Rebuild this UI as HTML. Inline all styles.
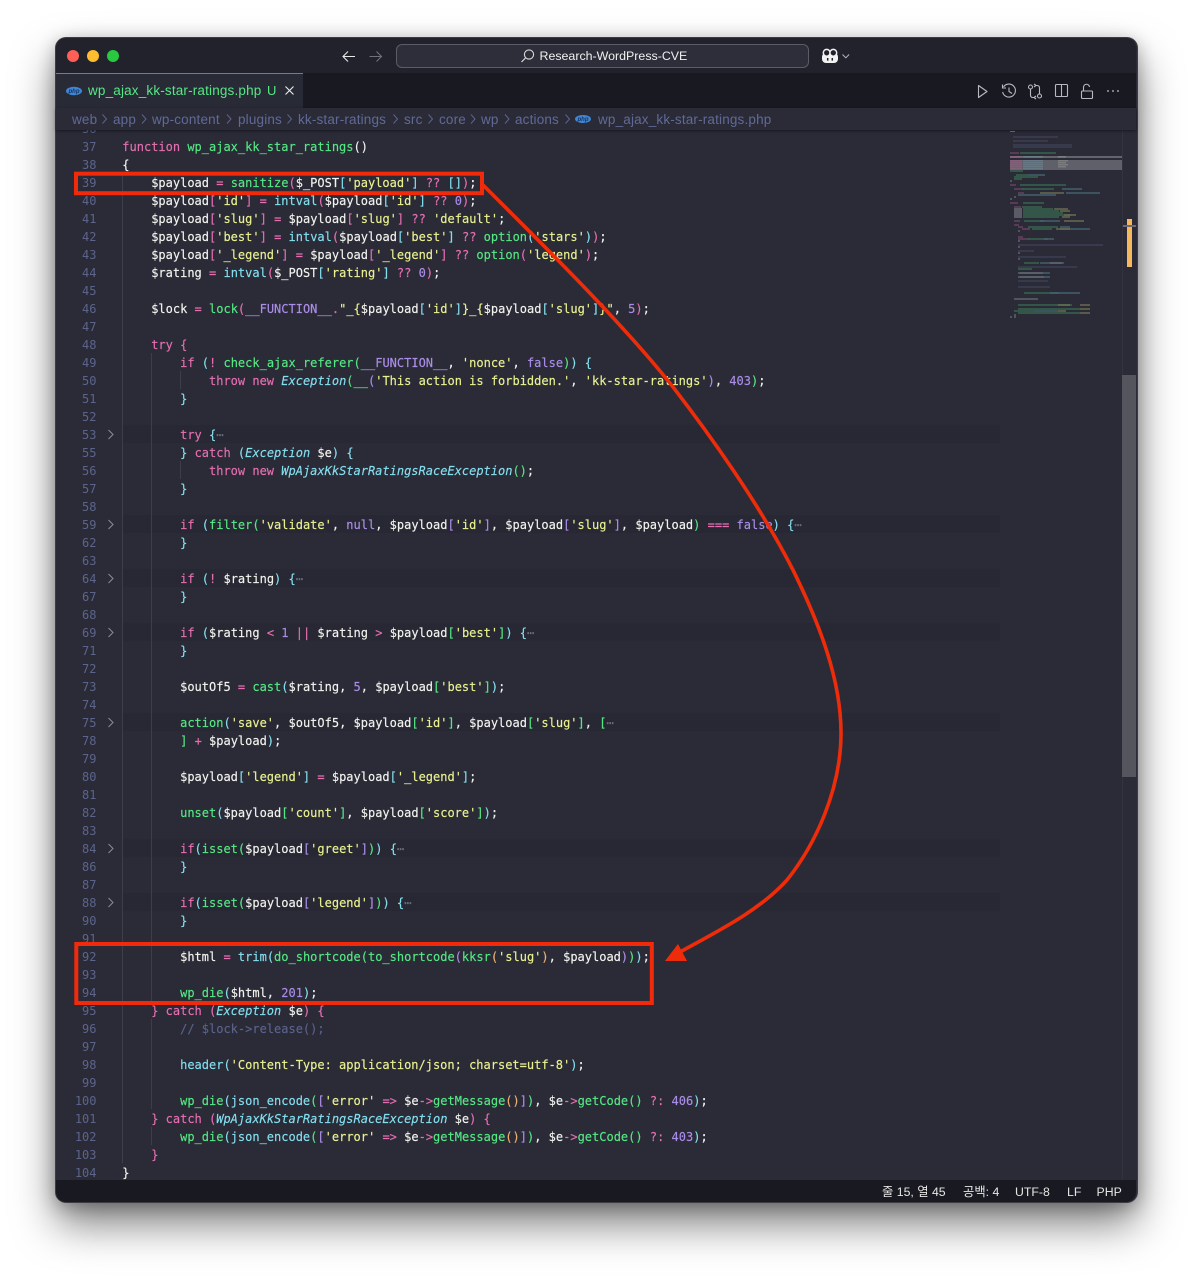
<!DOCTYPE html>
<html lang="ko">
<head>
<meta charset="utf-8">
<title>wp_ajax_kk-star-ratings.php</title>
<style>
html,body{margin:0;padding:0;width:1192px;height:1276px;overflow:hidden;background:#fff}
body{position:relative;font-family:"Liberation Sans","Noto Sans CJK KR",sans-serif}
#win{position:absolute;left:55.500px;top:37.500px;width:1081px;height:1164px;border-radius:10px;background:#2a2b37;box-shadow:0 0 0 1px #3c3c42,0 22px 42px rgba(0,0,0,.5),0 4px 18px rgba(0,0,0,.3)}
#abs{position:absolute;left:0;top:0;width:1192px;height:1276px;overflow:hidden}
.a{position:absolute}
#title{left:56px;top:38px;width:1080px;height:35px;background:#21222c;border-radius:10px 10px 0 0}
#tabs{left:56px;top:73px;width:1080px;height:35px;background:#191a21}
#tab{left:56px;top:73px;width:247px;height:35px;background:#282a36;border-top:1px solid #a5628e;box-sizing:border-box}
#crumb{left:56px;top:108px;width:1080px;height:22px;background:#2a2b37;box-shadow:0 1px 3px rgba(0,0,0,.45);z-index:3}
#status{left:56px;top:1180px;width:1080px;height:22px;background:#191a21;border-radius:0 0 10px 10px;z-index:4}
#search{left:396px;top:44px;width:413px;height:24px;box-sizing:border-box;border:1px solid #5b5c66;border-radius:6px;background:#2d2e39}
.ui{white-space:nowrap;line-height:16px}
.cr{color:#616a97;font-size:13.500px;letter-spacing:.17px;top:112px;z-index:5}
.st{color:#e6e6e6;font-size:12.300px;top:1184px;z-index:5}
#ed{left:56px;top:130px;width:1066px;height:1050px;overflow:hidden}
pre{margin:0;font:12px/18px "DejaVu Sans Mono","Liberation Mono",monospace;position:absolute;top:-10px}
#nums{left:0;width:40.500px;text-align:right;color:#5d648c}
#code{left:66.300px;color:#f3f3ee;-webkit-text-stroke:.15px}
#code i{font-style:normal}
.k{color:#e56fb1}.f{color:#55e884}.t{color:#84dfef}.s{color:#eaf191}.n{color:#ab8de8}.o{color:#f0b070}.m{color:#5b618a}
#code i.ci{color:#84dfef;font-style:italic}
#code i.dot{color:#6a6d80;line-height:0}
.fold{position:absolute;left:66px;width:878px;height:18px;background:#272833}
.g{position:absolute;width:1px;background:#3d3e4b}
#sb{left:1122px;top:130px;width:14px;height:1050px;border-left:1px solid #32333f;box-sizing:border-box;z-index:2}
#slider{left:1122px;top:375px;width:14px;height:402px;background:#54555d;z-index:2}
svg{position:absolute;left:0;top:0;overflow:visible}
</style>
</head>
<body>
<div id="win"></div>
<div id="abs">
<div id="title" class="a"></div>
<div id="tabs" class="a"></div>
<div id="tab" class="a"></div>
<div id="crumb" class="a"></div>
<div id="search" class="a"></div>
<div id="status" class="a"></div>

<div class="a ui" style="left:539.500px;top:48px;color:#f0f0f0;font-size:12.400px;z-index:5">Research-WordPress-CVE</div>
<div class="a ui" style="left:88px;top:83px;color:#55e884;font-size:13.500px;letter-spacing:.17px;z-index:5">wp_ajax_kk-star-ratings.php</div>
<div class="a ui" style="left:267px;top:83px;color:#55e884;font-size:13px;z-index:5">U</div>

<span class="a ui cr" style="left:72px">web</span>
<span class="a ui cr" style="left:113px">app</span>
<span class="a ui cr" style="left:152px">wp-content</span>
<span class="a ui cr" style="left:238px">plugins</span>
<span class="a ui cr" style="left:298px">kk-star-ratings</span>
<span class="a ui cr" style="left:404px">src</span>
<span class="a ui cr" style="left:439px">core</span>
<span class="a ui cr" style="left:481px">wp</span>
<span class="a ui cr" style="left:515px">actions</span>
<span class="a ui cr" style="left:598px">wp_ajax_kk-star-ratings.php</span>

<span class="a ui st" style="left:882px">줄 15, 열 45</span>
<span class="a ui st" style="left:963px">공백: 4</span>
<span class="a ui st" style="left:1015px">UTF-8</span>
<span class="a ui st" style="left:1067px">LF</span>
<span class="a ui st" style="left:1096.500px">PHP</span>

<div id="ed" class="a">
<div class="fold" style="top:295px"></div>
<div class="fold" style="top:385px"></div>
<div class="fold" style="top:439px"></div>
<div class="fold" style="top:493px"></div>
<div class="fold" style="top:583px"></div>
<div class="fold" style="top:709px"></div>
<div class="fold" style="top:763px"></div>
<div class="g" style="left:66px;top:43px;height:990px"></div>
<div class="g" style="left:95px;top:223px;height:648px"></div>
<div class="g" style="left:95px;top:889px;height:90px"></div>
<div class="g" style="left:95px;top:997px;height:18px"></div>
<div class="g" style="left:124px;top:241px;height:18px"></div>
<div class="g" style="left:124px;top:331px;height:18px"></div>
<pre id="nums">36
37
38
39
40
41
42
43
44
45
46
47
48
49
50
51
52
53
55
56
57
58
59
62
63
64
67
68
69
71
72
73
74
75
78
79
80
81
82
83
84
86
87
88
90
91
92
93
94
95
96
97
98
99
100
101
102
103
104</pre>
<pre id="code">

<i class="k">function</i> <i class="f">wp_ajax_kk_star_ratings</i>()
{
    $payload <i class="k">=</i> <i class="f">sanitize</i><i class="k">(</i>$_POST<i class="t">[</i><i class="s">'payload'</i><i class="t">]</i> <i class="k">??</i> <i class="t">[]</i><i class="k">)</i>;
    $payload<i class="k">[</i><i class="s">'id'</i><i class="k">]</i> <i class="k">=</i> <i class="t">intval</i><i class="k">(</i>$payload<i class="t">[</i><i class="s">'id'</i><i class="t">]</i> <i class="k">??</i> <i class="n">0</i><i class="k">)</i>;
    $payload<i class="k">[</i><i class="s">'slug'</i><i class="k">]</i> <i class="k">=</i> $payload<i class="k">[</i><i class="s">'slug'</i><i class="k">]</i> <i class="k">??</i> <i class="s">'default'</i>;
    $payload<i class="k">[</i><i class="s">'best'</i><i class="k">]</i> <i class="k">=</i> <i class="t">intval</i><i class="k">(</i>$payload<i class="t">[</i><i class="s">'best'</i><i class="t">]</i> <i class="k">??</i> <i class="f">option</i><i class="t">(</i><i class="s">'stars'</i><i class="t">)</i><i class="k">)</i>;
    $payload<i class="k">[</i><i class="s">'_legend'</i><i class="k">]</i> <i class="k">=</i> $payload<i class="k">[</i><i class="s">'_legend'</i><i class="k">]</i> <i class="k">??</i> <i class="f">option</i><i class="k">(</i><i class="s">'legend'</i><i class="k">)</i>;
    $rating <i class="k">=</i> <i class="t">intval</i><i class="k">(</i>$_POST<i class="t">[</i><i class="s">'rating'</i><i class="t">]</i> <i class="k">??</i> <i class="n">0</i><i class="k">)</i>;

    $lock <i class="k">=</i> <i class="f">lock</i><i class="k">(</i><i class="n">__FUNCTION__</i><i class="k">.</i><i class="s">"_{</i>$payload<i class="t">[</i><i class="s">'id'</i><i class="t">]</i><i class="s">}_{</i>$payload<i class="t">[</i><i class="s">'slug'</i><i class="t">]</i><i class="s">}"</i>, <i class="n">5</i><i class="k">)</i>;

    <i class="k">try</i> <i class="k">{</i>
        <i class="k">if</i> <i class="t">(</i><i class="k">!</i> <i class="f">check_ajax_referer</i><i class="f">(</i><i class="n">__FUNCTION__</i>, <i class="s">'nonce'</i>, <i class="n">false</i><i class="f">)</i><i class="t">)</i> <i class="t">{</i>
            <i class="k">throw new</i> <i class="ci">Exception</i><i class="f">(</i><i class="f">__</i><i class="n">(</i><i class="s">'This action is forbidden.'</i>, <i class="s">'kk-star-ratings'</i><i class="n">)</i>, <i class="n">403</i><i class="f">)</i>;
        <i class="t">}</i>

        <i class="k">try</i> <i class="t">{</i><i class="dot">⋯</i>
        <i class="t">}</i> <i class="k">catch</i> <i class="t">(</i><i class="ci">Exception</i> $e<i class="t">)</i> <i class="t">{</i>
            <i class="k">throw new</i> <i class="ci">WpAjaxKkStarRatingsRaceException</i><i class="f">()</i>;
        <i class="t">}</i>

        <i class="k">if</i> <i class="t">(</i><i class="f">filter(</i><i class="s">'validate'</i>, <i class="n">null</i>, $payload<i class="n">[</i><i class="s">'id'</i><i class="n">]</i>, $payload<i class="n">[</i><i class="s">'slug'</i><i class="n">]</i>, $payload<i class="f">)</i> <i class="k">===</i> <i class="n">false</i><i class="t">)</i> <i class="t">{</i><i class="dot">⋯</i>
        <i class="t">}</i>

        <i class="k">if</i> <i class="t">(</i><i class="k">!</i> $rating<i class="t">)</i> <i class="t">{</i><i class="dot">⋯</i>
        <i class="t">}</i>

        <i class="k">if</i> <i class="t">(</i>$rating <i class="k">&lt;</i> <i class="n">1</i> <i class="k">||</i> $rating <i class="k">&gt;</i> $payload<i class="f">[</i><i class="s">'best'</i><i class="f">]</i><i class="t">)</i> <i class="t">{</i><i class="dot">⋯</i>
        <i class="t">}</i>

        $outOf5 <i class="k">=</i> <i class="f">cast</i><i class="t">(</i>$rating, <i class="n">5</i>, $payload<i class="f">[</i><i class="s">'best'</i><i class="f">]</i><i class="t">)</i>;

        <i class="f">action</i><i class="t">(</i><i class="s">'save'</i>, $outOf5, $payload<i class="f">[</i><i class="s">'id'</i><i class="f">]</i>, $payload<i class="f">[</i><i class="s">'slug'</i><i class="f">]</i>, <i class="f">[</i><i class="dot">⋯</i>
        <i class="f">]</i> <i class="k">+</i> $payload<i class="t">)</i>;

        $payload<i class="t">[</i><i class="s">'legend'</i><i class="t">]</i> <i class="k">=</i> $payload<i class="t">[</i><i class="s">'_legend'</i><i class="t">]</i>;

        <i class="f">unset</i><i class="t">(</i>$payload<i class="f">[</i><i class="s">'count'</i><i class="f">]</i>, $payload<i class="f">[</i><i class="s">'score'</i><i class="f">]</i><i class="t">)</i>;

        <i class="k">if</i><i class="t">(</i><i class="f">isset(</i>$payload<i class="n">[</i><i class="s">'greet'</i><i class="n">]</i><i class="f">)</i><i class="t">)</i> <i class="t">{</i><i class="dot">⋯</i>
        <i class="t">}</i>

        <i class="k">if</i><i class="t">(</i><i class="f">isset(</i>$payload<i class="n">[</i><i class="s">'legend'</i><i class="n">]</i><i class="f">)</i><i class="t">)</i> <i class="t">{</i><i class="dot">⋯</i>
        <i class="t">}</i>

        $html <i class="k">=</i> <i class="t">trim(</i><i class="f">do_shortcode(to_shortcode</i><i class="n">(</i><i class="f">kksr</i><i class="o">(</i><i class="s">'slug'</i><i class="o">)</i>, $payload<i class="n">)</i><i class="f">)</i><i class="t">)</i>;

        <i class="f">wp_die</i><i class="t">(</i>$html, <i class="n">201</i><i class="t">)</i>;
    <i class="k">} catch (</i><i class="ci">Exception</i> $e<i class="k">) {</i>
        <i class="m">// $lock-&gt;release();</i>

        <i class="t">header(</i><i class="s">'Content-Type: application/json; charset=utf-8'</i><i class="t">)</i>;

        <i class="f">wp_die</i><i class="t">(</i><i class="t">json_encode</i><i class="f">(</i><i class="n">[</i><i class="s">'error'</i> <i class="k">=&gt;</i> $e<i class="k">-&gt;</i><i class="f">getMessage</i><i class="o">()</i><i class="n">]</i><i class="f">)</i>, $e<i class="k">-&gt;</i><i class="f">getCode()</i> <i class="k">?:</i> <i class="n">406</i><i class="t">)</i>;
    <i class="k">} catch (</i><i class="ci">WpAjaxKkStarRatingsRaceException</i> $e<i class="k">) {</i>
        <i class="f">wp_die</i><i class="t">(</i><i class="t">json_encode</i><i class="f">(</i><i class="n">[</i><i class="s">'error'</i> <i class="k">=&gt;</i> $e<i class="k">-&gt;</i><i class="f">getMessage</i><i class="o">()</i><i class="n">]</i><i class="f">)</i>, $e<i class="k">-&gt;</i><i class="f">getCode()</i> <i class="k">?:</i> <i class="n">403</i><i class="t">)</i>;
    <i class="k">}</i>
}</pre>
</div>

<div id="sb" class="a"></div>
<div id="slider" class="a"></div>
<div class="a" style="left:1127px;top:219px;width:5px;height:48px;background:#f5b85f;z-index:3"></div>
<div class="a" style="left:1123px;top:225px;width:13px;height:2px;background:#6a6b72;z-index:3"></div>

<svg width="1192" height="1276" style="z-index:6" fill="none">
  <!-- traffic lights -->
  <circle cx="73" cy="56" r="6" fill="#ff5f57"/>
  <circle cx="93" cy="56" r="6" fill="#febc2e"/>
  <circle cx="113" cy="56" r="6" fill="#28c840"/>
  <!-- nav arrows -->
  <path d="M355 56.500H343.500M348 51.500L343 56.500L348 61.500" stroke="#e8e8e8" stroke-width="1.100"/>
  <path d="M369.500 56.500H381M376.500 51.500L381.500 56.500L376.500 61.500" stroke="#70717a" stroke-width="1.100"/>
  <!-- search icon -->
  <circle cx="529" cy="54.500" r="4.600" stroke="#d8d8d8" stroke-width="1.100"/>
  <path d="M525.500 58L521.500 62" stroke="#d8d8d8" stroke-width="1.200"/>
  <!-- copilot -->
  <rect x="822" y="53" width="16" height="10" rx="4" fill="#f2f2f2"/>
  <circle cx="826.700" cy="52.800" r="3.400" fill="#21222c" stroke="#f2f2f2" stroke-width="1.500"/>
  <circle cx="833.300" cy="52.800" r="3.400" fill="#21222c" stroke="#f2f2f2" stroke-width="1.500"/>
  <path d="M827.700 58v2.600M832.300 58v2.600" stroke="#21222c" stroke-width="1.500"/>
  <path d="M842.500 54.500l3.300 3.300 3.300-3.300" stroke="#b5b5bb" stroke-width="1"/>
  <!-- tab php icon -->
  <ellipse cx="74" cy="91" rx="8" ry="4.300" fill="#3f86d6"/>
  <text x="74" y="93" font-size="6" font-family="Liberation Sans, sans-serif" font-style="italic" font-weight="bold" text-anchor="middle" fill="#16335c">php</text>
  <!-- tab close -->
  <path d="M285.500 86.500l8 8M293.500 86.500l-8 8" stroke="#f0f0f0" stroke-width="1.100"/>
  <!-- toolbar icons -->
  <path d="M978.500 85.500L987 91.500L978.500 97.500z" stroke="#b9bac1" stroke-width="1.100" stroke-linejoin="round"/>
  <path d="M1003.500 87a6.500 6.500 0 1 1-.9 5" stroke="#b9bac1" stroke-width="1.100"/>
  <path d="M1002.500 84.500v3.500h3.500M1009 87.500v4l3 2" stroke="#b9bac1" stroke-width="1.100"/>
  <circle cx="1030.500" cy="87" r="2" stroke="#b9bac1" stroke-width="1.100"/>
  <circle cx="1039.500" cy="96" r="2" stroke="#b9bac1" stroke-width="1.100"/>
  <path d="M1030.500 89v6c0 1.500.8 2.500 2.500 2.500h1M1039.500 94v-6c0-1.500-.8-2.500-2.500-2.500h-1M1034 84l2 1.500-2 1.500M1036 96l-2 1.500 2 1.500" stroke="#b9bac1" stroke-width="1.100"/>
  <rect x="1055.500" y="84.500" width="12" height="12" rx="1" stroke="#b9bac1" stroke-width="1.100"/>
  <path d="M1061.500 84.500v12" stroke="#b9bac1" stroke-width="1.100"/>
  <rect x="1081.500" y="91" width="11" height="7.500" rx="1" stroke="#b9bac1" stroke-width="1.100"/>
  <path d="M1083.500 91v-3.500a3 3 0 0 1 6-.5" stroke="#b9bac1" stroke-width="1.100"/>
  <circle cx="1108" cy="91" r=".9" fill="#c5c6cc"/><circle cx="1113" cy="91" r=".9" fill="#c5c6cc"/><circle cx="1118" cy="91" r=".9" fill="#c5c6cc"/>
  <!-- breadcrumb chevrons and icon -->
  <path d="M102.500 114.500l4 4.500-4 4.500M142 114.500l4 4.500-4 4.500M227 114.500l4 4.500-4 4.500M287.500 114.500l4 4.500-4 4.500M393.500 114.500l4 4.500-4 4.500M428.500 114.500l4 4.500-4 4.500M471 114.500l4 4.500-4 4.500M505 114.500l4 4.500-4 4.500M565.500 114.500l4 4.500-4 4.500" stroke="#5d648c" stroke-width="1"/>
  <ellipse cx="583" cy="119" rx="8" ry="4" fill="#3f86d6"/>
  <text x="583" y="121" font-size="6" font-family="Liberation Sans, sans-serif" font-style="italic" font-weight="bold" text-anchor="middle" fill="#16335c">php</text>
  <!-- fold chevrons -->
  <path d="M108.500 430l4.500 4.500-4.500 4.500M108.500 520l4.500 4.500-4.500 4.500M108.500 574l4.500 4.500-4.500 4.500M108.500 628l4.500 4.500-4.500 4.500M108.500 718l4.500 4.500-4.500 4.500M108.500 844l4.500 4.500-4.500 4.500M108.500 898l4.500 4.500-4.500 4.500" stroke="#8a8c9c" stroke-width="1"/>
  <!-- minimap selection -->
  <rect x="1010" y="156" width="112" height="2" fill="#62636d"/>
  <rect x="1010" y="160" width="112" height="10" fill="#5f606a"/>
  <g opacity=".6">
  <path d="M1010 156.900h12M1010 160.900h12M1010 162.900h12M1010 164.900h12M1010 166.900h12M1010 168.900h12" stroke="#d2659f" stroke-width=".8"/>
  <path d="M1023 156.900h20M1023 160.900h20M1023 162.900h20M1023 164.900h20M1023 166.900h20M1023 168.900h20" stroke="#7fb4c4" stroke-width=".8"/>
  <path d="M1058 156.900h8M1058 160.900h10M1058 162.900h8M1058 164.900h10M1058 166.900h8" stroke="#bcbfae" stroke-width=".8"/>
  </g>
  <rect x="1014" y="208" width="8" height="10" fill="#5a5b65"/>
  <!-- minimap code -->
  <g stroke-width=".8" opacity=".75">
    <path d="M1010 131.500h5M1010 153h9M1010 185h6M1010 203h8M1014 189h8M1018 193h6M1014 207h7M1014 221h6M1014 225h5M1018 227h5M1022 229h8M1018 237h5M1018 239h4M1022 239h7" stroke="#cf6aa4"/>
    <path d="M1013 137h45M1013 141h35M1013 145h59M1013 147h59M1018 245h85M1018 251h16M1018 257h48M1018 267h59M1018 281h30M1018 287h32" stroke="#5a5f84"/>
    <path d="M1020 153h36M1010 171h13M1016 175h12M1014 177h24M1014 179h8M1020 185h46M1024 189h30M1023 203h21M1022 207h20M1023 209h30M1023 211h36M1023 213h40M1023 215h48M1023 217h36M1024 221h20M1028 227h30M1032 229h20M1028 239h20M1024 263h15M1018 269h14M1024 293h35M1018 305h54M1018 309h62M1014 311h20M1018 313h62" stroke="#4cc677"/>
    <path d="M1028 175h17M1022 189h2M1062 189h20M1066 193h34M1018 195h38M1040 221h20M1060 227h10M1060 229h30M1044 239h10M1040 263h24M1020 273h30M1020 277h30M1050 293h30M1034 311h24" stroke="#6fbccb"/>
    <path d="M1040 193h24M1054 209h14M1060 211h10M1064 215h12M1062 217h8M1064 221h20M1058 305h12M1080 305h10M1080 309h10M1058 311h8M1080 313h10M1056 229h14" stroke="#d2d578"/>
    <path d="M1010 181h2M1010 199h2M1014 197h2M1018 231h2M1018 241h2M1018 247h2M1018 253h2M1018 259h2M1018 299h19M1014 299h24M1050 263h12M1018 273h25M1018 277h26M1014 317h2M1010 317h2M1014 315h2" stroke="#bfc0c4"/>
  </g>
  <!-- annotations -->
  <rect x="76" y="173.700" width="406" height="19.500" stroke="#f22a0c" stroke-width="4"/>
  <rect x="76.300" y="944" width="575.500" height="59" stroke="#f22a0c" stroke-width="4"/>
  <path d="M483 185C540 242 620 320 673 387C710 435 760 505 793 570C820 625 841 680 841 733C841 790 815 845 787 880C760 910 720 930 680 952" stroke="#ee2c0a" stroke-width="3.600"/>
  <path d="M678 944L665 961L687 961z" fill="#ee2c0a"/>
</svg>
</div>
</body>
</html>
